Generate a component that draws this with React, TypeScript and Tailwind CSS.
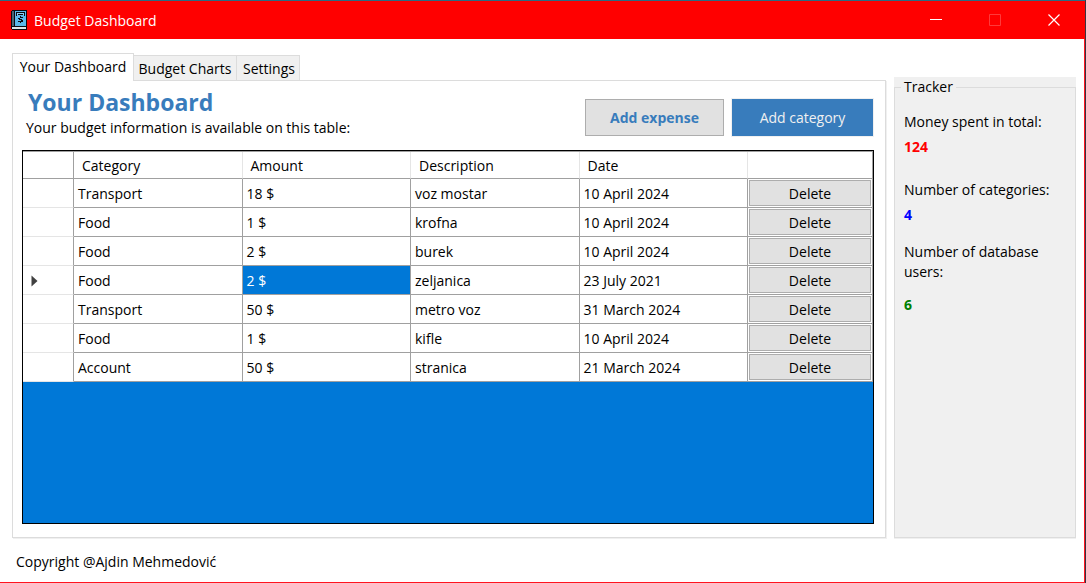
type Expense = { category: string; amount: string; description: string; date: string };

const expenses: Expense[] = [
  { category: "Transport", amount: "18 $", description: "voz mostar", date: "10 April 2024" },
  { category: "Food", amount: "1 $", description: "krofna", date: "10 April 2024" },
  { category: "Food", amount: "2 $", description: "burek", date: "10 April 2024" },
  { category: "Food", amount: "2 $", description: "zeljanica", date: "23 July 2021" },
  { category: "Transport", amount: "50 $", description: "metro voz", date: "31 March 2024" },
  { category: "Food", amount: "1 $", description: "kifle", date: "10 April 2024" },
  { category: "Account", amount: "50 $", description: "stranica", date: "21 March 2024" },
];

const selectedRow = 3;

function BookIcon() {
  return (
    <svg width="16" height="20" viewBox="0 0 16 20" shapeRendering="crispEdges" aria-hidden="true">
      <path d="M1 0h15v20H1l-1-1V1z" fill="#0b0b10" />
      <path d="M1 1h2v15H1z" fill="#4a6472" />
      <path d="M4 1h11v15H4z" fill="#5ab8ea" />
      <path d="M1 17h14v2H1z" fill="#dfe6ea" />
      <path d="M5 2h9v4H5z" fill="#0b0b10" />
      <path d="M6 3h7v2H6z" fill="#8fd0f2" />
      <path d="M7 4h5v1H7z" fill="#0b0b10" />
      <path d="M6 5h7v1H6z" fill="#5ab8ea" />
      <path d="M9 6h1v1h2v1H9v1h2v1h1v2h-2v1H9v-1H7v-1h3v-1H8V9H7V8h2z" fill="#0b0b10" />
    </svg>
  );
}

function TitleBar() {
  return (
    <header className="flex h-[39px] items-center border-t border-[#2b6b82] bg-[#ff0000] pr-[2px] pl-[11px] text-white">
      <BookIcon />
      <h1 className="ml-[7px] flex-1 pt-0.5">Budget Dashboard</h1>
      <button type="button" aria-label="Minimize" className="flex h-full w-[59px] items-center justify-center">
        <svg width="12" height="12" viewBox="0 0 12 12" aria-hidden="true">
          <path d="M0 5.5h12" stroke="#fff" />
        </svg>
      </button>
      <button type="button" aria-label="Maximize" disabled className="flex h-full w-[59px] items-center justify-center">
        <svg width="12" height="12" viewBox="0 0 12 12" aria-hidden="true">
          <path d="M.5.5h11v11H.5z" fill="none" stroke="#ff3a3a" />
        </svg>
      </button>
      <button type="button" aria-label="Close" className="flex h-full w-[59px] items-center justify-center">
        <svg width="12" height="12" viewBox="0 0 12 12" aria-hidden="true">
          <path d="M.5.5l11 11M11.5.5l-11 11" stroke="#fff" strokeWidth="1.2" />
        </svg>
      </button>
    </header>
  );
}

function Tabs() {
  return (
    <div role="tablist" className="flex items-end">
      <button
        type="button"
        role="tab"
        aria-selected="true"
        className="z-10 -mb-px h-7 w-[122px] border border-b-0 border-[#dcdcdc] bg-white pb-0.5 whitespace-nowrap"
      >
        Your Dashboard
      </button>
      <button
        type="button"
        role="tab"
        aria-selected="false"
        className="h-[25px] w-[103px] border-t border-r border-[#dcdcdc] bg-[#f0f0f0] pt-0.5 whitespace-nowrap"
      >
        Budget Charts
      </button>
      <button
        type="button"
        role="tab"
        aria-selected="false"
        className="h-[25px] w-[63px] border-t border-r border-[#dcdcdc] bg-[#f0f0f0] pt-0.5 pl-0.5 whitespace-nowrap"
      >
        Settings
      </button>
    </div>
  );
}

function ExpenseTable() {
  const head = "border-b border-r border-b-[#a0a0a0] border-r-[#e5e5e5] pt-0.5 pl-2 text-left font-normal";
  const cell = "border-b border-r border-[#a0a0a0] pt-0.5 pl-1";
  return (
    <div className="flex-1 border border-black bg-[#0078d7]">
      <table className="w-full table-fixed border-separate border-spacing-0 border-t border-[#a0a0a0] bg-white">
        <colgroup>
          <col className="w-[51px]" />
          <col />
          <col />
          <col />
          <col />
          <col className="w-[125px]" />
        </colgroup>
        <thead>
          <tr className="h-[27px]">
            <td className="border-r border-b border-[#a0a0a0]" />
            <th scope="col" className={head}>Category</th>
            <th scope="col" className={head}>Amount</th>
            <th scope="col" className={head}>Description</th>
            <th scope="col" className={head}>Date</th>
            <td className="border-r border-b border-[#a0a0a0]" />
          </tr>
        </thead>
        <tbody>
          {expenses.map((expense, i) => (
            <tr key={i} className="h-[29px]">
              <td className="border-r border-b border-r-[#a0a0a0] border-b-[#e5e5e5] pt-0.5 pl-2">
                {i === selectedRow && (
                  <svg width="7" height="12" viewBox="0 0 7 12" aria-hidden="true">
                    <path d="M.5.5L6.5 6l-6 5.5z" fill="#404040" />
                  </svg>
                )}
              </td>
              <td className={cell}>{expense.category}</td>
              <td className={i === selectedRow ? `${cell} bg-[#0078d7] text-white` : cell}>{expense.amount}</td>
              <td className={cell}>{expense.description}</td>
              <td className={cell}>{expense.date}</td>
              <td className="border-r border-b border-[#a0a0a0] p-px">
                <button type="button" className="block h-[26px] w-full border border-[#adadad] bg-[#e1e1e1] pt-0.5">
                  Delete
                </button>
              </td>
            </tr>
          ))}
        </tbody>
      </table>
    </div>
  );
}

function Tracker() {
  return (
    <aside className="mt-6 flex w-[182px] flex-col bg-[#f0f0f0] pb-px">
      <fieldset className="flex-1 border border-[#dcdcdc] px-[9px]">
        <legend className="-ml-[3px] px-[3px]">Tracker</legend>
        <dl className="pt-[15px]">
          <dt>Money spent in total:</dt>
          <dd className="mt-[5px] font-bold text-[#ff0000]">124</dd>
          <dt className="mt-[23px]">Number of categories:</dt>
          <dd className="mt-[5px] font-bold text-[#0000ff]">4</dd>
          <dt className="mt-[17px]">Number of database users:</dt>
          <dd className="mt-[13px] font-bold text-[#008000]">6</dd>
        </dl>
      </fieldset>
    </aside>
  );
}

export default function App() {
  return (
    <div className="flex min-h-screen flex-col border-r border-[#3a3340] bg-white font-['Open_Sans','Noto_Sans',sans-serif] text-[14px] leading-5 text-black">
      <TitleBar />
      <div className="flex flex-1 flex-col border-r border-b border-[#ff1420]">
        <main className="flex flex-1 gap-2 pt-[14px] pr-2 pl-3">
          <div className="flex min-w-0 flex-1 flex-col">
            <Tabs />
            <section className="mb-px flex flex-1 flex-col border border-[#dcdcdc] pr-[11px] pb-[13px] pl-[9px] shadow-[1px_1px_0_#f0f0f0]">
              <div className="flex items-end justify-between">
                <div className="pt-[5px] pl-1">
                  <h2 className="pl-0.5 text-[23px] leading-8 font-bold text-[#387cbc]">Your Dashboard</h2>
                  <p>Your budget information is available on this table:</p>
                </div>
                <div className="flex gap-2 pr-px pb-0.5">
                  <button
                    type="button"
                    className="h-[37px] w-[139px] border border-[#adadad] bg-[#e1e1e1] font-bold text-[#387cbc]"
                  >
                    Add expense
                  </button>
                  <button type="button" className="h-[37px] w-[141px] bg-[#387cbc] text-[#f0f0f0] outline outline-[#f0f0f0]">
                    Add category
                  </button>
                </div>
              </div>
              <div className="mt-3 flex flex-1 flex-col">
                <ExpenseTable />
              </div>
            </section>
          </div>
          <Tracker />
        </main>
        <footer className="px-4 pt-[13px] pb-[10px]">Copyright @Ajdin Mehmedović</footer>
      </div>
    </div>
  );
}
